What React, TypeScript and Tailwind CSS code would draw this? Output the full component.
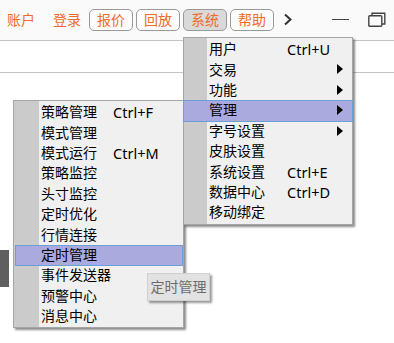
import React from "react";

type Item = { label: string; shortcut?: string; sub?: boolean; active?: boolean };

const mainItems: Item[] = [
  { label: "用户", shortcut: "Ctrl+U" },
  { label: "交易", sub: true },
  { label: "功能", sub: true },
  { label: "管理", sub: true, active: true },
  { label: "字号设置", sub: true },
  { label: "皮肤设置" },
  { label: "系统设置", shortcut: "Ctrl+E" },
  { label: "数据中心", shortcut: "Ctrl+D" },
  { label: "移动绑定" },
];

const subItems: Item[] = [
  { label: "策略管理", shortcut: "Ctrl+F" },
  { label: "模式管理" },
  { label: "模式运行", shortcut: "Ctrl+M" },
  { label: "策略监控" },
  { label: "头寸监控" },
  { label: "定时优化" },
  { label: "行情连接" },
  { label: "定时管理", active: true },
  { label: "事件发送器" },
  { label: "预警中心" },
  { label: "消息中心" },
];

const Arrow = () => (
  <svg width="6" height="10" viewBox="0 0 6 10">
    <path d="M0 0 L6 5 L0 10 Z" fill="#000" />
  </svg>
);

const FONT = "font-['Noto_Sans','Noto_Sans_CJK_SC',sans-serif]";

function MainMenu() {
  return (
    <div
      className={`absolute left-[183px] top-[37px] w-[170px] border border-[#a5a5a5] bg-[linear-gradient(to_right,#cbcbcb_23px,#f0f0f0_23px)] pt-px pb-px shadow-[2px_2px_2px_rgba(0,0,0,0.45)] ${FONT}`}
    >
      {mainItems.map((it) => (
        <div key={it.label} className="relative flex h-[20.4px] items-center text-[14px] leading-[20px] text-black">
          {it.active && (
            <div className="absolute -left-px -right-px top-0 bottom-[-1px] border border-[#6a9fd8] bg-[#abaade]" />
          )}
          <span className="relative pl-[25px]">{it.label}</span>
          {it.shortcut && (
            <span className="absolute left-[103px] text-[14.5px]">{it.shortcut}</span>
          )}
          {it.sub && (
            <span className="absolute right-[9px] top-[5px] flex">
              <Arrow />
            </span>
          )}
        </div>
      ))}
    </div>
  );
}

function SubMenu() {
  return (
    <div
      className={`absolute left-[13px] top-[100px] w-[171px] border border-[#a5a5a5] bg-[linear-gradient(to_right,#cbcbcb_25px,#f0f0f0_25px)] pt-px pb-px shadow-[2px_2px_2px_rgba(0,0,0,0.45)] ${FONT}`}
    >
      {subItems.map((it) => (
        <div key={it.label} className="relative flex h-[20.4px] items-center text-[14px] leading-[20px] text-black">
          {it.active && (
            <div className="absolute left-px right-0 top-0 bottom-[-1px] border border-[#6a9fd8] bg-[#abaade]" />
          )}
          <span className="relative pl-[27px]">{it.label}</span>
          {it.shortcut && (
            <span className="absolute left-[99px] text-[14.5px]">{it.shortcut}</span>
          )}
        </div>
      ))}
    </div>
  );
}

function TopButton({ label, pressed }: { label: string; pressed?: boolean }) {
  return (
    <div
      className={`flex h-[22px] w-[44px] items-center justify-center rounded-[5px] border border-[#9a9a9a] text-[14px] leading-none text-[#f06a28] ${
        pressed ? "bg-[#d9d9d9]" : "bg-[#fcfcfc]"
      }`}
    >
      {label}
    </div>
  );
}

export default function App() {
  return (
    <div className={`relative h-[343px] w-[394px] overflow-hidden bg-white ${FONT}`}>
      {/* Top bar */}
      <div className="flex h-[41px] items-center border-b border-[#c4c4c4] bg-[#fafafa] pb-[1px]">
        <span className="ml-[7px] text-[14px] leading-none text-[#f06a28]">账户</span>
        <span className="ml-[18px] text-[14px] leading-none text-[#f06a28]">登录</span>
        <div className="ml-[8px] flex gap-[3px]">
          <TopButton label="报价" />
          <TopButton label="回放" />
          <TopButton label="系统" pressed />
          <TopButton label="帮助" />
        </div>
        <svg className="ml-[9px]" width="10" height="13" viewBox="0 0 10 13">
          <path d="M2 1.5 L7.5 6.5 L2 11.5" fill="none" stroke="#333" strokeWidth="2" />
        </svg>
        <div className="ml-auto mr-[8px] flex items-center gap-[19px]">
          <div className="h-[1.5px] w-[17px] bg-[#444]" />
          <svg width="18" height="15" viewBox="0 0 18 15">
            <path d="M4 3.5 V1.2 H16.8 V12 H14" fill="none" stroke="#444" strokeWidth="1.4" />
            <rect x="0.8" y="3.7" width="13" height="10.5" fill="none" stroke="#444" strokeWidth="1.4" rx="1" />
          </svg>
        </div>
      </div>
      {/* second strip */}
      <div className="h-[32px] border-b border-[#c4c4c4] bg-white" />

      {/* dark block at left */}
      <div className="absolute left-0 top-[250px] h-[37px] w-[9px] bg-[#5f5f5f]" />

      <SubMenu />
      <MainMenu />

      {/* tooltip */}
      <div className="absolute left-[147px] top-[273px] flex h-[28px] w-[63px] items-center justify-center border border-[#d0d0d0] bg-[#e2e2e2] text-[14px] leading-none text-[#6d6d6d] shadow-[2px_2px_2px_rgba(0,0,0,0.4)]">
        定时管理
      </div>
    </div>
  );
}
